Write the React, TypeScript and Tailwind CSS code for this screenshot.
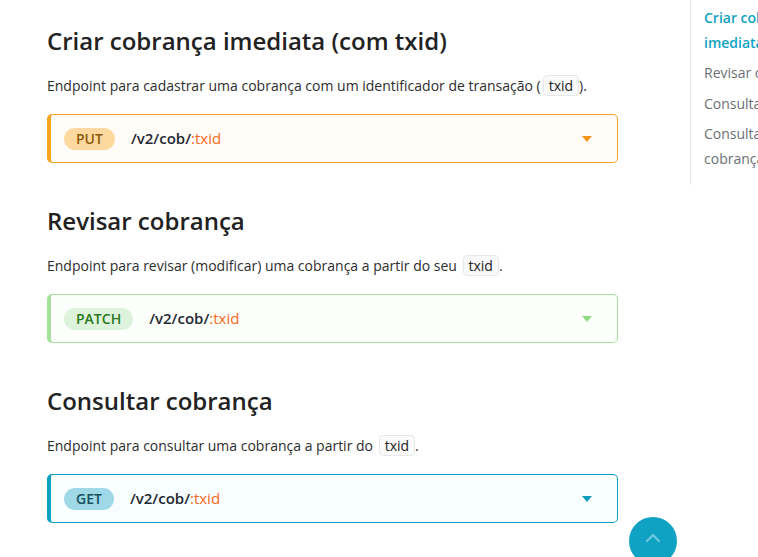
import React from "react";

type Method = "PUT" | "PATCH" | "GET";

const styles: Record<Method, { card: string; badge: string; caret: string }> = {
  PUT: {
    card: "border-[#f5a51f] bg-[#fffcf8]",
    badge: "bg-[#fdd99f] text-[#8a5a0c]",
    caret: "border-t-[#f5961a]",
  },
  PATCH: {
    card: "border-[#a3e29a] bg-[#fdfffd]",
    badge: "bg-[#def3db] text-[#2a7a22]",
    caret: "border-t-[#8fdc80]",
  },
  GET: {
    card: "border-[#0fa1c2] bg-[#f8fdfe]",
    badge: "bg-[#9fd9e8] text-[#164f5c]",
    caret: "border-t-[#0b9cbe]",
  },
};

function Code({ children }: { children: React.ReactNode }) {
  return (
    <code
      className="ml-[2px] inline-block rounded-[4px] border border-[#e6e8eb] bg-[#fafafa] px-[5px] text-[14px] leading-[19px] text-[#222]"
      style={{ fontFamily: "'Open Sans', sans-serif" }}
    >
      {children}
    </code>
  );
}

function Card({ method }: { method: Method }) {
  const s = styles[method];
  return (
    <div className={`flex h-[49px] w-[571px] items-center rounded-[5px] border border-l-4 pl-[13px] pr-[25px] ${s.card}`}>
      <span className={`flex h-[22px] items-center rounded-full px-[12px] text-[14px] font-semibold ${s.badge}`}>
        {method}
      </span>
      <span className="ml-[16px] text-[15px] font-semibold text-[#1f2933]">
        /v2/cob/<span className="font-medium text-[#f26a1b]">:txid</span>
      </span>
      <span className={`ml-auto h-0 w-0 border-x-[5px] border-t-[6px] border-x-transparent ${s.caret}`} />
    </div>
  );
}

function Section({
  title,
  desc,
  after,
  method,
  first,
}: {
  title: string;
  desc: string;
  after: string;
  method: Method;
  first?: boolean;
}) {
  return (
    <section className={first ? "pt-[25px]" : "pt-[42px]"}>
      <h2 className="text-[24px] font-semibold leading-[32px] text-[#222]">{title}</h2>
      <p className="mt-[17px] text-[14px] leading-[24px] text-[#2d2d2d]">
        {desc}
        <Code>txid</Code>
        {after}
      </p>
      <div className="mt-[16px]">
        <Card method={method} />
      </div>
    </section>
  );
}

export default function App() {
  return (
    <div
      className="relative h-[557px] w-[758px] overflow-hidden bg-white"
      style={{ fontFamily: "'Open Sans', 'Noto Sans', sans-serif" }}
    >
      <div className="flex">
        <main className="w-[690px] shrink-0 pl-[47px]">
          <Section
            first
            title="Criar cobrança imediata (com txid)"
            desc="Endpoint para cadastrar uma cobrança com um identificador de transação ("
            after=")."
            method="PUT"
          />
          <Section
            title="Revisar cobrança"
            desc="Endpoint para revisar (modificar) uma cobrança a partir do seu "
            after="."
            method="PATCH"
          />
          <Section
            title="Consultar cobrança"
            desc="Endpoint para consultar uma cobrança a partir do "
            after="."
            method="GET"
          />
        </main>
        <aside className="w-[200px] shrink-0">
          <nav className="flex w-[165px] flex-col gap-[6px] border-l border-[#e3e8ee] pb-[14px] pl-[13px] pt-[6px] text-[14px] leading-[24.5px]">
            <a className="font-semibold text-[#0ea3c4]">Criar cobrança imediata (com txid)</a>
            <a className="text-[#6b7075]">Revisar cobrança</a>
            <a className="text-[#6b7075]">Consultar cobrança</a>
            <a className="text-[#6b7075]">Consultar lista de cobranças</a>
          </nav>
        </aside>
      </div>
      <button className="absolute left-[629px] top-[517px] flex h-[48px] w-[48px] items-center justify-center rounded-full bg-[#0fa2c3]">
        <svg width="16" height="10" viewBox="0 0 16 10" fill="none" className="-mt-[6px]">
          <path d="M2 8 L8 2 L14 8" stroke="#6fc8dd" strokeWidth="2.2" strokeLinecap="round" strokeLinejoin="round" />
        </svg>
      </button>
    </div>
  );
}
